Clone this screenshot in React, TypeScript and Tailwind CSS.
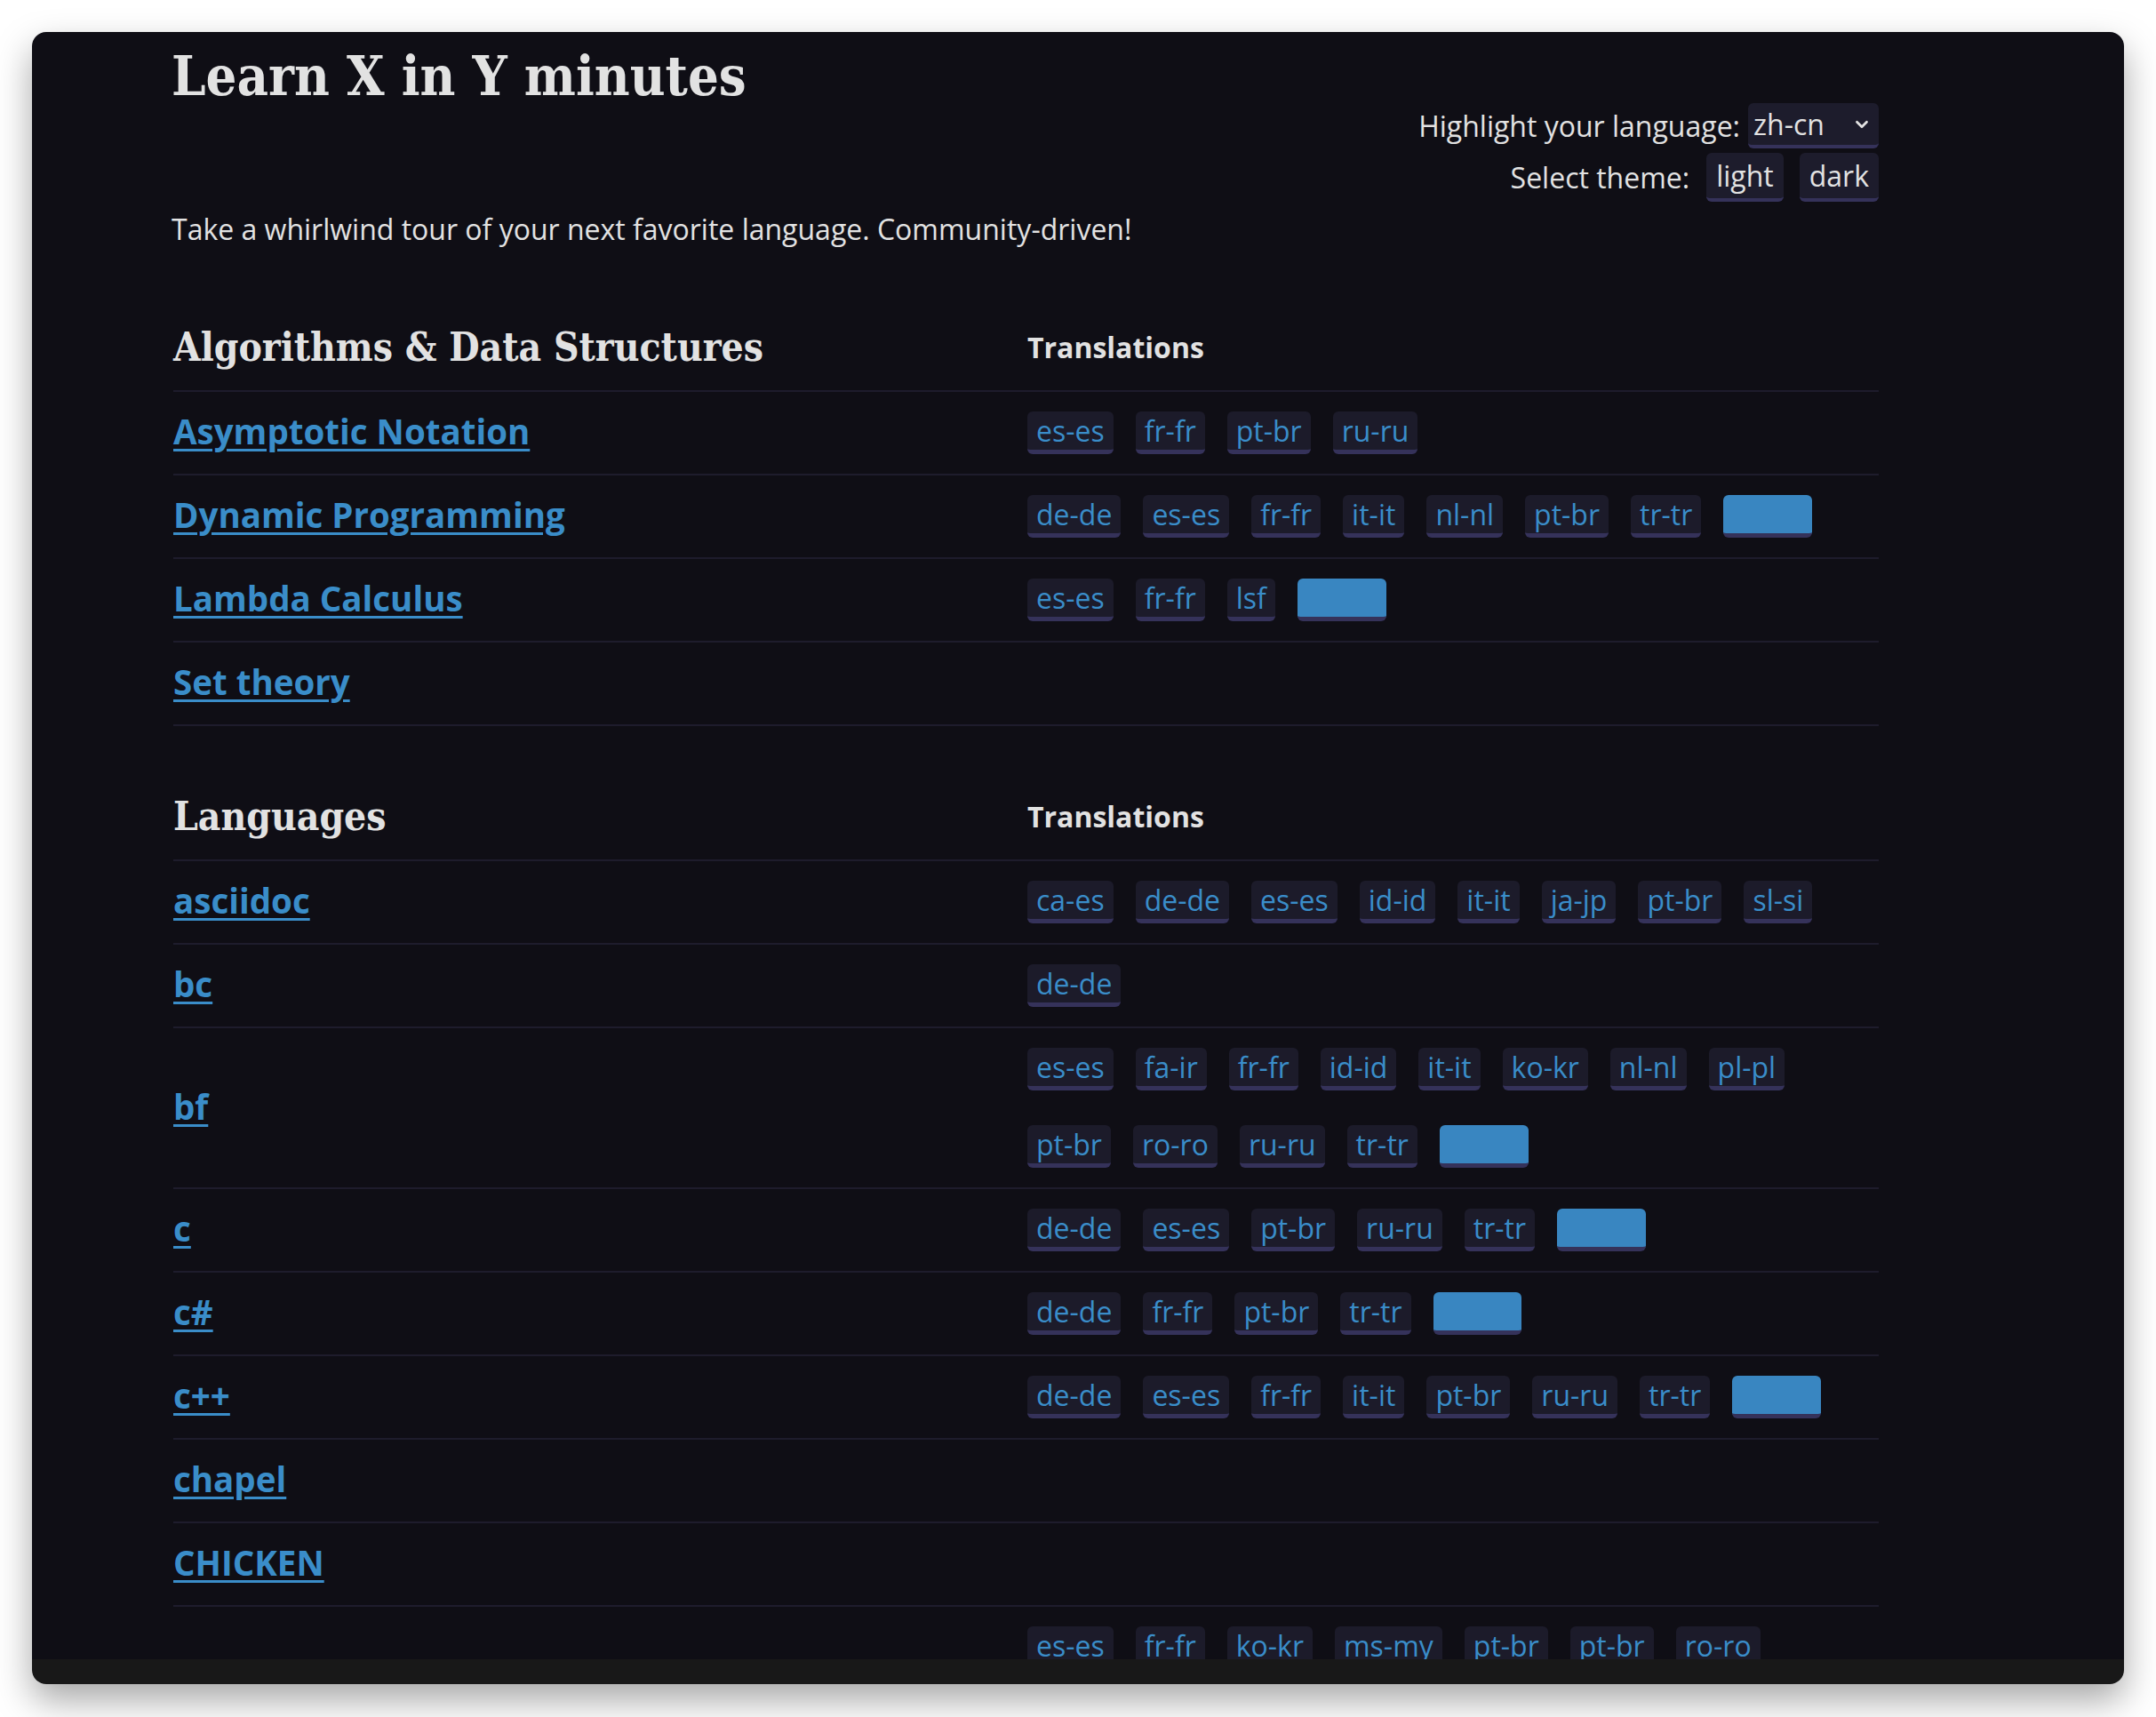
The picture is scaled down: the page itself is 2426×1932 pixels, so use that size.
import { ChevronDown } from "lucide-react";

type Row = { name: string; tags: string[]; hl?: boolean };

const algorithms: Row[] = [
  { name: "Asymptotic Notation", tags: ["es-es", "fr-fr", "pt-br", "ru-ru"] },
  { name: "Dynamic Programming", tags: ["de-de", "es-es", "fr-fr", "it-it", "nl-nl", "pt-br", "tr-tr"], hl: true },
  { name: "Lambda Calculus", tags: ["es-es", "fr-fr", "lsf"], hl: true },
  { name: "Set theory", tags: [] },
];

const languages: Row[] = [
  { name: "asciidoc", tags: ["ca-es", "de-de", "es-es", "id-id", "it-it", "ja-jp", "pt-br", "sl-si"] },
  { name: "bc", tags: ["de-de"] },
  {
    name: "bf",
    tags: ["es-es", "fa-ir", "fr-fr", "id-id", "it-it", "ko-kr", "nl-nl", "pl-pl", "pt-br", "ro-ro", "ru-ru", "tr-tr"],
    hl: true,
  },
  { name: "c", tags: ["de-de", "es-es", "pt-br", "ru-ru", "tr-tr"], hl: true },
  { name: "c#", tags: ["de-de", "fr-fr", "pt-br", "tr-tr"], hl: true },
  { name: "c++", tags: ["de-de", "es-es", "fr-fr", "it-it", "pt-br", "ru-ru", "tr-tr"], hl: true },
  { name: "chapel", tags: [] },
  { name: "CHICKEN", tags: [] },
  { name: "clojure", tags: ["es-es", "fr-fr", "ko-kr", "ms-my", "pt-br", "pt-br", "ro-ro", "ru-ru", "tr-tr"], hl: true },
];

const slab = "font-['DejaVu_Serif','Liberation_Serif',serif] font-stretch-condensed";

function Tag({ label, hl }: { label: string; hl?: boolean }) {
  return (
    <span
      className={`mr-[25px] h-[48px] px-[10px] rounded-[6px] border-b-[5px] border-[#35325a] text-[32px] leading-[43px] ${
        hl ? "bg-[#3986c1] text-[#3986c1]" : "bg-[#1c1b2a] text-[#3a8dc9]"
      }`}
    >
      {label}
    </span>
  );
}

function Section({ title, rows }: { title: string; rows: Row[] }) {
  return (
    <div>
      <div className="flex items-center h-[98px] border-b-2 border-[#1e1c2c]">
        <h2 className={`w-[961px] ${slab} font-bold text-[44px] leading-[60px] text-[#e2e2e2]`}>{title}</h2>
        <div className="text-[32px] font-bold text-[#e2e2e2]">Translations</div>
      </div>
      {rows.map((r) => (
        <div key={r.name} className="flex items-center min-h-[94px] border-b-2 border-[#1e1c2c]">
          <div className="w-[961px] shrink-0 -mt-[2px]">
            <a
              href="#"
              className="text-[38.5px] font-bold text-[#3a8dc9] underline decoration-[3px] underline-offset-[5px]"
            >
              {r.name}
            </a>
          </div>
          {r.tags.length > 0 && (
            <div className="flex flex-wrap gap-y-[39px] py-[22px] flex-1">
              {r.tags.map((t, i) => (
                <Tag key={i} label={t} />
              ))}
              {r.hl && <Tag label="zh-cn" hl />}
            </div>
          )}
        </div>
      ))}
    </div>
  );
}

export default function App() {
  return (
    <div className="w-[2426px] h-[1932px] bg-white pt-[36px] pl-[36px] font-['Open_Sans',sans-serif]">
      <div className="w-[2354px] h-[1859px] rounded-[16px] overflow-hidden flex flex-col shadow-[0_18px_40px_rgba(0,0,0,0.35)]">
        <div className="flex-1 overflow-hidden bg-[#0f0e15]">
          <div className="ml-[159px] w-[1919px] pt-[11px]">
            {/* Header */}
            <div className="flex justify-between items-start">
              <div>
                <h1 className={`${slab} font-bold text-[61px] leading-[69px] pt-[4px] h-[69px] text-[#e2e2e2] -ml-[2px]`}>
                  Learn X in Y minutes
                </h1>
                <p className="mt-[120px] text-[32px] leading-[44px] text-[#e2e2e2] -ml-[2px]">
                  Take a whirlwind tour of your next favorite language. Community-driven!
                </p>
              </div>
              <div className="pt-[69px] flex flex-col items-end gap-[5px] text-[32px] text-[#e2e2e2]">
                <div className="flex items-center gap-[9px]">
                  <span>Highlight your language:</span>
                  <div className="w-[147px] h-[51px] flex items-center justify-between pl-[6px] pr-[8px] bg-[#1d1c2c] rounded-[6px] border-b-[4px] border-[#35325a]">
                    <span>zh-cn</span>
                    <ChevronDown className="w-[22px] h-[22px]" strokeWidth={3} />
                  </div>
                </div>
                <div className="flex items-center">
                  <span className="mr-[19px]">Select theme:</span>
                  <button className="h-[55px] px-[11px] bg-[#1d1c2c] rounded-[6px] border-b-[4px] border-[#35325a] mr-[18px]">
                    light
                  </button>
                  <button className="h-[55px] px-[11px] bg-[#1d1c2c] rounded-[6px] border-b-[4px] border-[#35325a]">
                    dark
                  </button>
                </div>
              </div>
            </div>

            <div className="mt-[63px]">
              <Section title="Algorithms & Data Structures" rows={algorithms} />
            </div>
            <div className="mt-[54px]">
              <Section title="Languages" rows={languages} />
            </div>
          </div>
        </div>
        <div className="h-[28px] bg-[#181818]" />
      </div>
    </div>
  );
}
